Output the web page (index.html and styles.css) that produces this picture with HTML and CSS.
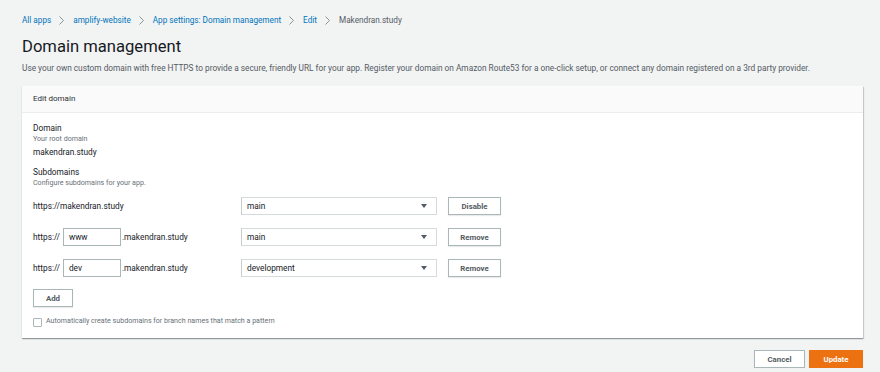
FILE: index.html
```html
<!DOCTYPE html>
<html lang="en">
<head>
    <meta charset="UTF-8">
    <meta name="viewport" content="width=device-width, initial-scale=1.0">
    <title>Domain management</title>
    <link rel="stylesheet" href="styles.css">
</head>
<body>
    <nav class="crumbs">
        <a href="#">All apps</a>
        <svg class="sep" viewBox="0 0 5 9"><polyline points="0.5,0.5 4.5,4.5 0.5,8.5"/></svg>
        <a href="#">amplify-website</a>
        <svg class="sep" viewBox="0 0 5 9"><polyline points="0.5,0.5 4.5,4.5 0.5,8.5"/></svg>
        <a href="#">App settings: Domain management</a>
        <svg class="sep" viewBox="0 0 5 9"><polyline points="0.5,0.5 4.5,4.5 0.5,8.5"/></svg>
        <a href="#">Edit</a>
        <svg class="sep" viewBox="0 0 5 9"><polyline points="0.5,0.5 4.5,4.5 0.5,8.5"/></svg>
        <span class="current">Makendran.study</span>
    </nav>

    <h1>Domain management</h1>
    <p class="desc">Use your own custom domain with free HTTPS to provide a secure, friendly URL for your app. Register your domain on Amazon Route53 for a one-click setup, or connect any domain registered on a 3rd party provider.</p>

    <section class="card">
        <div class="card-head">Edit domain</div>
        <div class="card-body">
            <div class="field">
                <div class="label">Domain</div>
                <div class="hint">Your root domain</div>
                <div class="value">makendran.study</div>
            </div>
            <div class="field subs">
                <div class="label">Subdomains</div>
                <div class="hint">Configure subdomains for your app.</div>
            </div>

            <div class="row">
                <div class="url">https://makendran.study</div>
                <div class="select"><span>main</span><span class="caret"></span></div>
                <button class="btn">Disable</button>
            </div>
            <div class="row">
                <div class="url">https://<span class="input">www</span>.makendran.study</div>
                <div class="select"><span>main</span><span class="caret"></span></div>
                <button class="btn">Remove</button>
            </div>
            <div class="row">
                <div class="url">https://<span class="input">dev</span>.makendran.study</div>
                <div class="select"><span>development</span><span class="caret"></span></div>
                <button class="btn">Remove</button>
            </div>

            <button class="btn add">Add</button>

            <label class="check"><span class="box"></span>Automatically create subdomains for branch names that match a pattern</label>
        </div>
    </section>

    <div class="actions">
        <button class="btn cancel">Cancel</button>
        <button class="btn primary">Update</button>
    </div>
</body>
</html>
```

FILE: styles.css
```css
body {
    font-family: Roboto, "Noto Sans", sans-serif;
    margin: 0;
    padding: 13px 17px 0 22px;
    background: #f2f3f3;
    color: #16191f;
}
.crumbs {
    display: flex;
    align-items: center;
    gap: 8px;
    font-size: 8.2px;
    height: 14px;
}
.crumbs a {
    color: #0073bb;
    text-decoration: none;
}
.crumbs .sep {
    width: 5px;
    height: 9px;
    margin-right: 1px;
    fill: none;
    stroke: #879596;
    stroke-width: 1;
}
.crumbs .current {
    color: #545b64;
}
h1 {
    font-size: 16.6px;
    font-weight: 400;
    margin: 9px 0 0;
    line-height: 22px;
}
.desc {
    font-size: 8.3px;
    color: #545b64;
    margin: 4px 0 0;
    line-height: 12px;
}
.card {
    margin-top: 12px;
    background: #fff;
    box-shadow: 0 1px 1px rgba(0, 28, 36, 0.3), 1px 1px 1px rgba(0, 28, 36, 0.15);
}
.card-head {
    background: #fafafa;
    border-bottom: 1px solid #eaeded;
    height: 26px;
    line-height: 26px;
    padding-left: 11px;
    font-size: 8px;
    color: #2a2e33;
}
.card-body {
    padding: 9px 11px 11px;
}
.field {
    margin-bottom: 7px;
}
.field.subs {
    margin-bottom: 9px;
}
.label {
    font-size: 8.3px;
    line-height: 12px;
}
.hint {
    font-size: 7.1px;
    color: #687078;
    line-height: 10px;
}
.value {
    font-size: 8.3px;
    line-height: 14px;
    margin-top: 1px;
}
.row {
    display: grid;
    grid-template-columns: 197px 196px auto;
    column-gap: 11px;
    align-items: center;
    height: 18px;
    margin-bottom: 13px;
    font-size: 8.3px;
}
.url {
    display: flex;
    align-items: center;
    white-space: pre;
}
.input {
    display: inline-block;
    box-sizing: border-box;
    width: 58px;
    height: 18px;
    line-height: 16px;
    border: 1px solid #aab7b8;
    padding-left: 5px;
    margin: 0 1px 0 3px;
}
.select {
    box-sizing: border-box;
    height: 18px;
    border: 1px solid #d5dbdb;
    border-left-color: #c6cdcd;
    display: flex;
    align-items: center;
    justify-content: space-between;
    padding: 0 9px 0 5px;
}
.caret {
    width: 0;
    height: 0;
    border-left: 3px solid transparent;
    border-right: 3px solid transparent;
    border-top: 4px solid #545b64;
}
.btn {
    box-sizing: border-box;
    height: 18px;
    background: #fff;
    border: 1px solid #aab7b8;
    color: #545b64;
    font-family: inherit;
    font-size: 7.8px;
    font-weight: 700;
    padding: 0;
    cursor: pointer;
    justify-self: start;
    box-shadow: 0 1px 1px rgba(0, 0, 0, 0.08);
}
.row .btn {
    width: 53px;
}
.btn.add {
    display: block;
    width: 40px;
    margin-top: -1px;
}
.check {
    display: flex;
    align-items: flex-start;
    gap: 4px;
    font-size: 7.1px;
    color: #687078;
    margin-top: 9px;
}
.box {
    box-sizing: border-box;
    width: 9px;
    height: 9px;
    border: 1px solid #aab7b8;
    border-radius: 1px;
    margin-top: 2px;
}
.actions {
    display: flex;
    justify-content: flex-end;
    gap: 4px;
    margin-top: 12px;
}
.btn.cancel {
    width: 51px;
}
.btn.primary {
    width: 54px;
    background: #ec7211;
    border-color: #ec7211;
    color: #fff;
}
```
